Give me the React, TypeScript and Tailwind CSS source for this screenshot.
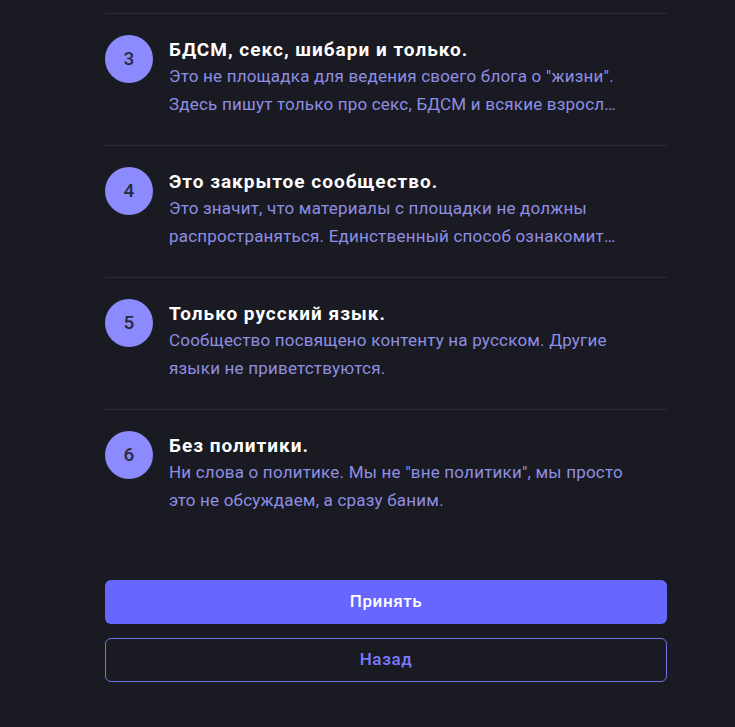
import React from 'react';

const rules = [
  {
    n: 3,
    title: 'БДСМ, секс, шибари и только.',
    text: 'Это не площадка для ведения своего блога о "жизни". Здесь пишут только про секс, БДСМ и всякие взросл…',
  },
  {
    n: 4,
    title: 'Это закрытое сообщество.',
    text: 'Это значит, что материалы с площадки не должны распространяться. Единственный способ ознакомит…',
  },
  {
    n: 5,
    title: 'Только русский язык.',
    text: 'Сообщество посвящено контенту на русском. Другие языки не приветствуются.',
  },
  {
    n: 6,
    title: 'Без политики.',
    text: 'Ни слова о политике. Мы не "вне политики", мы просто это не обсуждаем, а сразу баним.',
  },
];

export default function App() {
  return (
    <div
      className="min-h-screen bg-[#1a1a22] pt-[13px]"
      style={{ fontFamily: 'Roboto, "Noto Sans", sans-serif' }}
    >
      <div className="ml-[105px] w-[562px]">
        <ul>
          {rules.map((r) => (
            <li
              key={r.n}
              className="flex items-start gap-4 border-t border-[#2d2d37] pt-[21px] pb-[27px]"
            >
              <div className="flex h-12 w-12 shrink-0 items-center justify-center rounded-full bg-[#8b8bff] text-[19px] font-medium text-[#2a2a3c]">
                {r.n}
              </div>
              <div className="w-[470px] pt-[2px]">
                <h3 className="text-[19px] font-bold leading-[25px] tracking-[1px] text-white">
                  {r.title}
                </h3>
                <p className="line-clamp-2 text-[17px] leading-7 tracking-[0.2px] text-[#8e8ee2]">
                  {r.text}
                </p>
              </div>
            </li>
          ))}
        </ul>

        <div className="mt-[39px] flex flex-col gap-[14px]">
          <button className="h-11 w-full rounded-md bg-[#6767ff] text-[17px] font-medium tracking-[0.6px] text-white">
            Принять
          </button>
          <button className="h-11 w-full rounded-md border border-[#7171e8] text-[17px] font-medium tracking-[0.6px] text-[#7a7aff]">
            Назад
          </button>
        </div>
      </div>
    </div>
  );
}
